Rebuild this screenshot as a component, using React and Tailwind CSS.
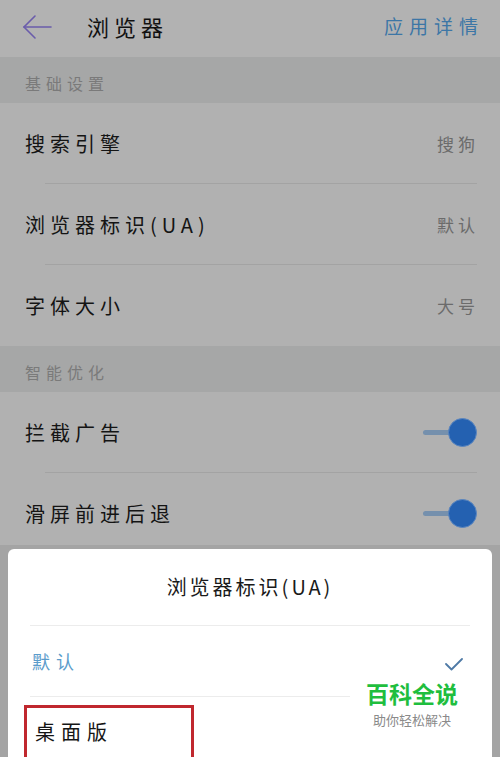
import React from 'react';

const font = { fontFamily: '"Noto Sans CJK SC", "Noto Sans", sans-serif' };

const Row = ({ label, value, toggle, divider = true }) => (
  <div className="relative h-[81px] flex items-center px-[25px]">
    <span className="text-[20px] tracking-[5px] text-[#141414]">{label}</span>
    <div className="ml-auto flex items-center">
      {value && <span className="text-[17px] tracking-[4px] text-[#6b6b6b] -mr-[4px]">{value}</span>}
      {toggle && (
        <div className="relative w-[54px] h-[30px] flex items-center mr-[-2px]">
          <div className="w-[34px] h-[5px] rounded-full bg-[#7590ad]" />
          <div className="absolute right-0 w-[29px] h-[29px] rounded-full bg-[#2461b1] border border-[#5a86c0]" />
        </div>
      )}
    </div>
    {divider && <div className="absolute bottom-0 left-[45px] right-[23px] h-px bg-[#a3a3a3]" />}
  </div>
);

const Section = ({ title }) => (
  <div className="h-[46px] bg-[#a6a7a7] flex items-center px-[25px] pt-[6px]">
    <span className="text-[16px] tracking-[5px] text-[#7a7a7a]">{title}</span>
  </div>
);

export default function App() {
  return (
    <div className="relative w-[500px] h-[757px] overflow-hidden bg-[#b1b1b1]" style={font}>
      {/* header */}
      <div className="h-[57px] flex items-center px-[22px] pb-[4px] bg-[#b2b2b2]">
        <svg width="30" height="26" viewBox="0 0 30 26" fill="none" stroke="#6a5cab" strokeWidth="1.6" strokeLinecap="round">
          <path d="M29 13H2" />
          <path d="M13 2L2 13l11 11" />
        </svg>
        <span className="ml-[35px] text-[22px] tracking-[5px] text-[#111]">浏览器</span>
        <span className="ml-auto text-[19px] tracking-[6px] text-[#3c76a6] -mr-[6px]">应用详情</span>
      </div>

      <Section title="基础设置" />
      <Row label="搜索引擎" value="搜狗" />
      <Row label="浏览器标识(UA)" value="默认" />
      <Row label="字体大小" value="大号" divider={false} />

      <Section title="智能优化" />
      <Row label="拦截广告" toggle />
      <Row label="滑屏前进后退" toggle divider={false} />

      {/* bottom sheet */}
      <div className="absolute left-0 right-0 top-[545px] bottom-0 bg-[#a4a4a4] px-[8px] pt-[4px]">
        <div className="h-full bg-white rounded-t-[6px] px-[22px]">
          <div className="h-[77px] flex items-center justify-center border-b border-[#ececec]">
            <span className="text-[20px] tracking-[3px] text-[#1a1a1a]">浏览器标识(UA)</span>
          </div>
          <div className="relative h-[71px] flex items-center pl-[2px]">
            <span className="text-[18px] tracking-[6px] text-[#5b9ccb]">默认</span>
            <svg className="ml-auto mr-[7px] mt-[6px]" width="18" height="13" viewBox="0 0 18 13" fill="none" stroke="#4f7aa6" strokeWidth="1.8" strokeLinecap="round" strokeLinejoin="round">
              <path d="M1 6l5.5 5.5L17 1" />
            </svg>
            <div className="absolute bottom-0 left-0 w-[320px] h-px bg-[#ececec]" />
          </div>
          <div className="flex">
            <div className="mt-[8px] -ml-[6px] w-[170px] h-[70px] border-[3px] border-[#c0282e] flex items-start pt-[9px] pl-[8px]">
              <span className="text-[20px] tracking-[6px] text-[#151515]">桌面版</span>
            </div>
          </div>
        </div>
      </div>

      {/* watermark */}
      <div className="absolute left-[366px] top-[678px] flex flex-col items-center">
        <span className="text-[23px] font-bold leading-[30px] text-[#1fbe3e]">百科全说</span>
        <span className="text-[13px] leading-[18px] text-[#8a8a8a] mt-[3px]">助你轻松解决</span>
      </div>
    </div>
  );
}
